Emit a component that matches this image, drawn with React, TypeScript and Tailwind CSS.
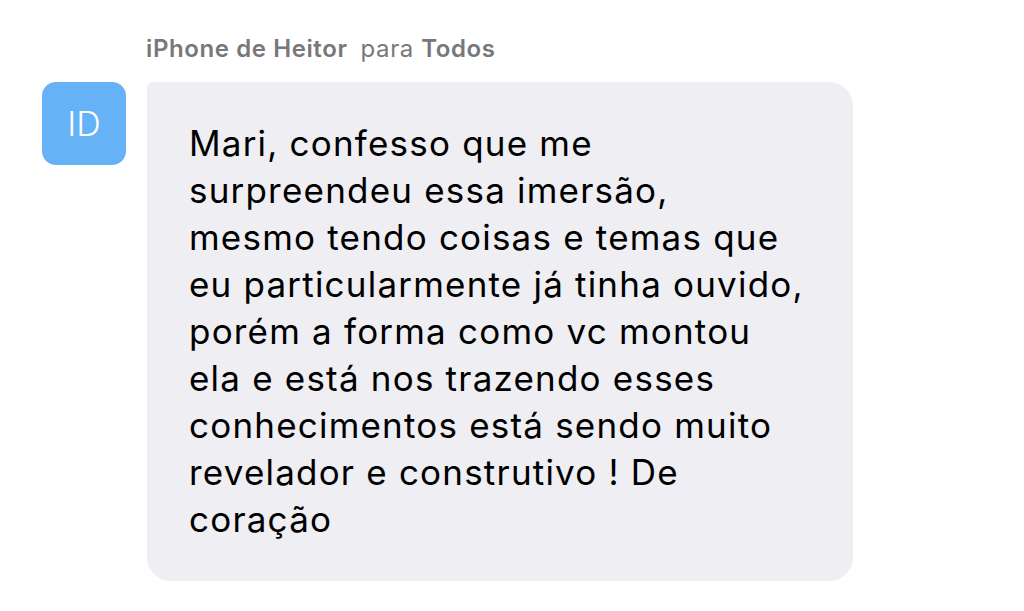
export default function App() {
  const lines = [
    "Mari, confesso que me",
    "surpreendeu essa imersão,",
    "mesmo tendo coisas e temas que",
    "eu particularmente já tinha ouvido,",
    "porém a forma como vc montou",
    "ela e está nos trazendo esses",
    "conhecimentos está sendo muito",
    "revelador e construtivo ! De",
    "coração",
  ];
  return (
    <div className="w-[1024px] h-[611px] bg-white overflow-hidden font-[Inter,sans-serif]">
      <div className="pl-[146px] pt-[34px] h-[82px] text-[24px] leading-[30px] text-[#77777c] tracking-[0.6px]">
        <span className="font-semibold">iPhone de Heitor</span>
        <span className="ml-[13px]">para </span>
        <span className="font-semibold">Todos</span>
      </div>
      <div className="flex pl-[42px] gap-[21px]">
        <div className="w-[84px] h-[83px] rounded-[14px] bg-[#66b2f7] flex items-center justify-center text-white text-[34px] font-light">
          ID
        </div>
        <div className="w-[706px] h-[499px] rounded-[24px] rounded-tl-[6px] bg-[#eeeef3] pl-[42px] pt-[38px] text-[35px] leading-[47px] text-black tracking-[1.2px]">
          {lines.map((l, i) => (
            <div key={i}>{l}</div>
          ))}
        </div>
      </div>
    </div>
  );
}
